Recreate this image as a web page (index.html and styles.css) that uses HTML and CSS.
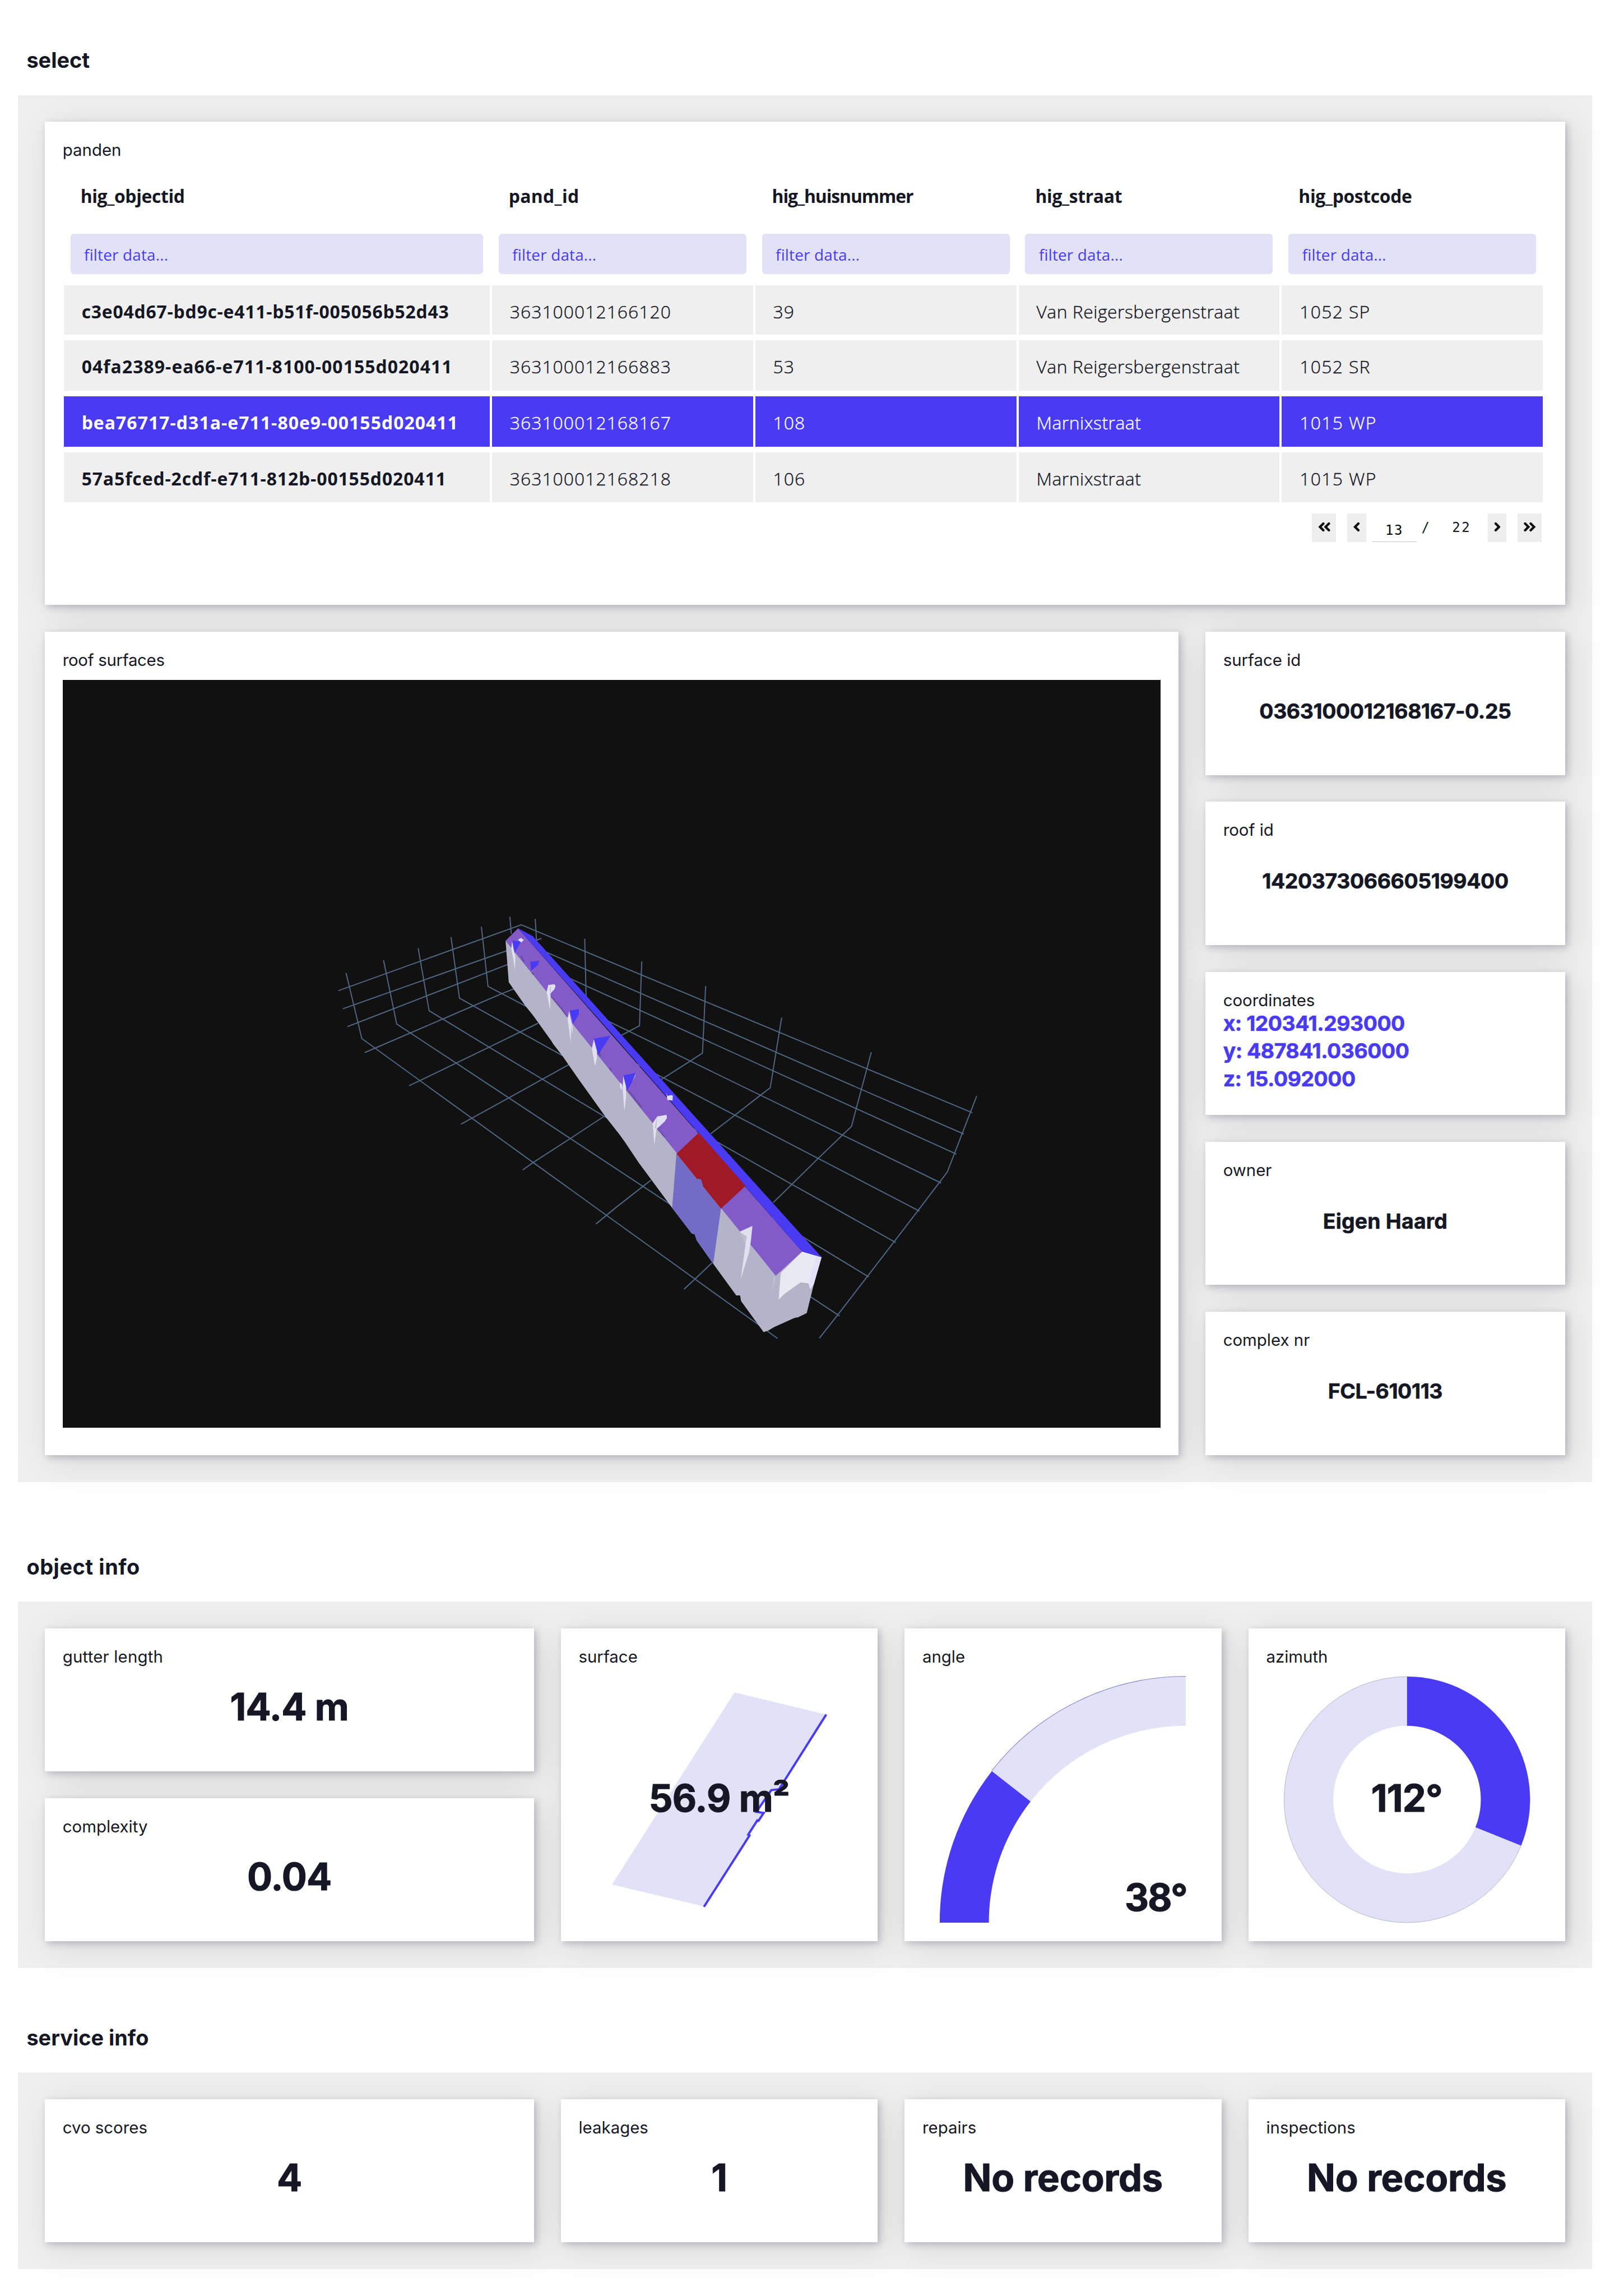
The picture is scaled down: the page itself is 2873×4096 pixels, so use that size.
FILE: index.html
```html
<!DOCTYPE html>
<html lang="nl">
<head>
<meta charset="utf-8">
<title>Roof dashboard</title>
<link rel="stylesheet" href="styles.css">
</head>
<body>
<main class="page">

<section class="section">
  <h2 class="heading heading-first">select</h2>
  <div class="panel panel-select">
    <article class="card card-table">
      <h3 class="label">panden</h3>
      <div class="table">
        <div class="row row-head"><span>hig_objectid</span><span>pand_id</span><span>hig_huisnummer</span><span>hig_straat</span><span>hig_postcode</span></div>
        <div class="row row-filter"><span>filter data...</span><span>filter data...</span><span>filter data...</span><span>filter data...</span><span>filter data...</span></div>
        <div class="row row-data row-top"><span>c3e04d67-bd9c-e411-b51f-005056b52d43</span><span>363100012166120</span><span>39</span><span>Van Reigersbergenstraat</span><span>1052 SP</span></div>
        <div class="row row-data"><span>04fa2389-ea66-e711-8100-00155d020411</span><span>363100012166883</span><span>53</span><span>Van Reigersbergenstraat</span><span>1052 SR</span></div>
        <div class="row row-data row-selected"><span>bea76717-d31a-e711-80e9-00155d020411</span><span>363100012168167</span><span>108</span><span>Marnixstraat</span><span>1015 WP</span></div>
        <div class="row row-data"><span>57a5fced-2cdf-e711-812b-00155d020411</span><span>363100012168218</span><span>106</span><span>Marnixstraat</span><span>1015 WP</span></div>
      </div>
      <nav class="pager">
        <button class="btn btn-wide"><svg width="22" height="18" viewBox="0 0 22 18"><path d="M9.500 3 3.500 9l6 6M19.500 3l-6 6 6 6"/></svg></button>
        <button class="btn btn-prev"><svg width="12" height="18" viewBox="0 0 12 18"><path d="M9 3 3 9l6 6"/></svg></button>
        <span class="page-now">13</span>
        <span class="page-slash">/</span>
        <span class="page-total">22</span>
        <button class="btn btn-next"><svg width="12" height="18" viewBox="0 0 12 18"><path d="M3 3l6 6-6 6"/></svg></button>
        <button class="btn btn-wide"><svg width="22" height="18" viewBox="0 0 22 18"><path d="M2.500 3l6 6-6 6M12.500 3l6 6-6 6"/></svg></button>
      </nav>
    </article>

    <article class="card card-roof">
      <h3 class="label label-roof">roof surfaces</h3>
      <svg class="scene" viewBox="112 1216 1964 1337" preserveAspectRatio="none">
        <g transform="matrix(.408163 0 0 .333333 560 1600)">
          <g class="grid-lines">
            <path d="M110 515 912 162 2889 1170M130 612 1000 235M1000 297 2851 1284M150 708 900 352M1090 430 2819 1392M1290 677 2752 1547"/>
            <path d="M144 420 213 772 964 1437 2035 2381M308 351 366 694 626 903 1290 1440 2307 2260M460 287 508 623 771 818 1290 1200 2435 2051M604 227 641 555 908 738 1090 862 1785 1337 2098 1554 2553 1866M737 172 766 492 930 597 1509 966 1848 1183 2213 1415 2657 1698"/>
            <path d="M226 847 570 666 828 530 880 505M420 1025 468 997 771 818 985 690M648 1231 857 1090 1004 990 1120 912M1350 755 1430 703 1435 525 1440 358M918 1477 964 1437 1127 1308 1274 1190M1525 992 1643 900 1706 850 1720 490"/>
            <path d="M1239 1767 1323 1682 1446 1564 1480 1532M1743 1282 1848 1183 1960 1076 2003 1036 2021 900 2053 660M1625 2117 1674 2061 1748 1975M2016 1652 2098 1554 2213 1415 2320 1289 2359 1243 2434 900 2446 845M2218 2380 2299 2254 2546 1862 2651 1694 2745 1543 2779 1488 2908 1080"/>
            <path d="M862 118 868 210M973 130 979 250M1190 237 1196 545"/>
          </g>
          <path fill="#b4b4c8" d="M843 247 857 470 930 597 965 650 1045 787 1051 800 1095 870 1160 985 1280 1190 1341 1285 1365 1325 1428 1440 1573 1680 1659 1818 1672 1822 1681 1855 1753 1980 1854 2150 1871 2150 1875 2180 1974 2347 1995 2338 2020 2320 2110 2270 2125 2267 2163 2245 2194 2090 2143 1915z"/>
          <path fill="#e9e9f3" d="M2143 1915 2049 2030 2040 2172 2067 2140 2136 2080 2171 2085 2178 2118 2194 2090 2228 1945z"/>
          <path fill="#e1e1f7" d="M2205 1937 2228 1945 2194 2090 2178 2118 2172 2090z"/>
          <path fill="#835bc9" d="M898 180 843 247 2027 2045 2143 1915z"/>
          <path fill="#493bf4" d="M898 180 962 222 1459 900 2228 1945 2143 1915 1302 737z"/>
          <path fill="#a01926" d="M1690 1277 1592 1390 1787 1685 1895 1562z"/>
          <path fill="#716cc6" d="M1592 1390 1573 1680 1659 1818 1672 1822 1681 1855 1753 1980 1787 1685z"/>
          <path fill="#716cc6" d="M1685 1523 1700 1528 1708 1560 1698 1575 1680 1562z"/>
          <g fill="#493bf4">
            <path d="M872 247 912 250 903 270 883 315zM951 360 990 354 986 376 955 408zM1124 622 1164 613 1165 640 1140 692zM1230 773 1303 757 1248 862zM1359 970 1414 957 1400 1000 1376 1052z"/>
          </g>
          <g fill="#e0e0f0">
            <path d="M872 250 868 290 877 345 884 405 886 330 878 290zM897 242 910 232 923 243 912 257zM955 420 974 394 970 400z"/>
            <path d="M1030 485 1057 480 1062 490 1057 508 1040 530 1038 615 1032 580 1023 522zM1122 624 1115 665 1129 795 1130 700 1136 750 1137 710zM1230 776 1221 825 1235 920 1243 880 1244 840zM1359 972 1356 1040 1364 1162 1371 1090 1371 1030zM1345 1008 1354 1018 1352 1048 1345 1035z"/>
            <path d="M1413 960 1398 1005 1412 970zM1548 1063 1553 1080 1568 1075 1576 1078 1575 1104 1552 1101z"/>
            <path d="M1508 1190 1549 1181 1550 1198 1540 1218 1505 1257 1495 1343 1488 1225zM1925 1777 1869 1808 1895 1872 1874 2062 1910 1920 1918 1860z"/>
            <path d="M2022 2048 2023 2060 2008 2135 2019 2070z"/>
          </g>
          <path fill="#bdbdcb" d="M1508 1190 1503 1257 1497 1250zM1042 485 1040 528 1036 510zM1869 1808 1900 1835 1895 1872 1888 1868z"/>
          <path class="speckle" d="M912 330 925 362M958 420 968 428M1045 550 1080 600M1085 605 1112 655M1255 845 1258 870M1382 1052 1440 1142M1510 1258 1540 1300M1300 930 1306 948"/>
        </g>
      </svg>
    </article>

    <div class="side">
      <article class="card"><h3 class="label">surface id</h3><p class="value value-long">0363100012168167-0.25</p></article>
      <article class="card"><h3 class="label">roof id</h3><p class="value value-long">1420373066605199400</p></article>
      <article class="card"><h3 class="label">coordinates</h3><p class="coords">x: 120341.293000<br>y: 487841.036000<br>z: 15.092000</p></article>
      <article class="card"><h3 class="label">owner</h3><p class="value value-name">Eigen Haard</p></article>
      <article class="card"><h3 class="label">complex nr</h3><p class="value value-long">FCL-610113</p></article>
    </div>
  </div>
</section>

<section class="section">
  <h2 class="heading heading-object">object info</h2>
  <div class="panel panel-tiles">
    <article class="card"><h3 class="label label-gutter">gutter length</h3><p class="figure">14.4 m</p></article>
    <article class="card card-tall">
      <h3 class="label">surface</h3>
      <div class="chart">
        <svg viewBox="1003 2980 567 492" width="567" height="492">
          <g transform="matrix(.408163 0 0 .395408 980 2880)">
            <path fill="#e1e1f7" d="M817 370 1219 470 1012 808 978 812 915 910 945 915 922 950 918 950 877 1012 882 1017 683 1338 280 1239z"/>
            <path class="gutter" d="M1219 470 1012 808 978 812 913 910 945 915 922 951 917 949 877 1013 883 1017 683 1340"/>
          </g>
        </svg>
        <p class="figure over over-middle">56.9 m²</p>
      </div>
    </article>
    <article class="card card-tall">
      <h3 class="label">angle</h3>
      <div class="chart">
        <svg viewBox="1618 2980 567 492" width="567" height="492">
          <path fill="none" stroke="#8583cf" stroke-width="2" d="M1774.300 3167.100A440 440 0 0 1 2121 2998"/>
          <path fill="#e1e1f7" d="M1774.300 3167.100A440 440 0 0 1 2121 2998V3086A352 352 0 0 0 1843.600 3221.300z"/>
          <path fill="#493bf4" d="M1681 3438A440 440 0 0 1 1774.300 3167.100L1843.600 3221.300A352 352 0 0 0 1769 3438z"/>
        </svg>
        <p class="figure over over-corner">38°</p>
      </div>
    </article>
    <article class="card card-tall">
      <h3 class="label">azimuth</h3>
      <div class="chart">
        <svg viewBox="2233 2980 567 492" width="567" height="492">
          <circle cx="2516.500" cy="3218" r="176" fill="none" stroke="#e1e1f7" stroke-width="88"/>
          <circle cx="2516.500" cy="3218" r="220" fill="none" stroke="#a9a9c0" stroke-width=".8"/>
          <path fill="#493bf4" d="M2516.500 2998A220 220 0 0 1 2720.500 3300.400L2638.900 3267.400A132 132 0 0 0 2516.500 3086z"/>
        </svg>
        <p class="figure over over-middle">112°</p>
      </div>
    </article>
    <article class="card"><h3 class="label">complexity</h3><p class="figure">0.04</p></article>
  </div>
</section>

<section class="section">
  <h2 class="heading heading-service">service info</h2>
  <div class="panel panel-tiles">
    <article class="card"><h3 class="label">cvo scores</h3><p class="figure">4</p></article>
    <article class="card"><h3 class="label">leakages</h3><p class="figure">1</p></article>
    <article class="card"><h3 class="label">repairs</h3><p class="figure figure-text">No records</p></article>
    <article class="card"><h3 class="label">inspections</h3><p class="figure figure-text">No records</p></article>
  </div>
</section>

</main>
</body>
</html>
```
FILE: styles.css
```css
:root {
  --ink: #151725;
  --accent: #493bf4;
  --tint: #e1e1f7;
  --grey: #efefef;
}
* { box-sizing: border-box; margin: 0; padding: 0; }
html { background: #fefefe; overflow: hidden; }
body { background: #fefefe; color: var(--ink); font-family: Inter, "Liberation Sans", sans-serif; }
.page { zoom: 0.99757; width: 2880px; height: 4106px; }

/* section titles */
.heading {
  display: flex;
  align-items: flex-end;
  padding: 0 0 37.6px 47.5px;
  font-size: 38px;
  line-height: 48px;
  font-weight: 700;
}
.heading-first { height: 170px; }
.heading-object { height: 214px; letter-spacing: .55px; }
.heading-service { height: 186px; }

.panel {
  display: grid;
  gap: 48px;
  margin: 0 32px;
  padding: 48px;
  background: var(--grey);
}
.panel-select { grid-template-columns: 2028px 644px; grid-template-rows: 864px 1472px; }
.panel-tiles { grid-template-columns: 875px repeat(3, 567px); grid-auto-rows: 256px; }

.card {
  background: #fff;
  padding: 32px;
  box-shadow: 4px 4px 12px rgba(20, 24, 50, .22), 10px 10px 56px rgba(0, 0, 0, .1);
}
.card-table { grid-column: 1 / -1; }
.card-tall { grid-row: span 2; }
.side { display: grid; grid-auto-rows: 256px; gap: 48px; }

.label { font-size: 29.5px; line-height: 36.6px; font-weight: 400; }
.label-roof { letter-spacing: -.3px; }
.label-gutter { letter-spacing: .2px; }

/* values */
.value {
  margin-top: 48.6px;
  font-size: 37.5px;
  line-height: 50px;
  font-weight: 700;
  -webkit-text-stroke: .6px currentColor;
  text-align: center;
  white-space: nowrap;
}
.value-long { letter-spacing: -.4px; }
.value-name { letter-spacing: .2px; }
.coords {
  margin-top: -1.6px;
  font-size: 37.5px;
  line-height: 50px;
  font-weight: 700;
  -webkit-text-stroke: .6px currentColor;
  letter-spacing: -.5px;
  color: var(--accent);
}
.figure {
  margin-top: 31.6px;
  font-size: 67px;
  line-height: 80px;
  font-weight: 700;
  -webkit-text-stroke: 1px currentColor;
  letter-spacing: -.8px;
  text-align: center;
  white-space: nowrap;
}
.figure-text { letter-spacing: -.2px; }

/* table */
.table { font-family: "Open Sans", "Liberation Sans", sans-serif; font-size: 32px; }
.row { display: grid; grid-template-columns: 766px repeat(4, 471px); }
.row-head { height: 126px; padding-top: 1px; align-items: center; font-weight: 700; letter-spacing: -.38px; }
.row-head span { padding-left: 32px; }
.row-head span:nth-child(2) { letter-spacing: .3px; }
.row-head span:nth-child(3) { letter-spacing: -1.12px; }
.row-filter { height: 98px; padding-top: 5.4px; font-size: 28px; letter-spacing: .16px; color: var(--accent); }
.row-filter span {
  height: 72px;
  margin: 0 14px;
  padding: 3px 0 0 24.5px;
  line-height: 70px;
  border-radius: 6px;
  background: var(--tint);
}
.row-data { height: 90px; margin-bottom: 10px; font-weight: 300; }
.row-top { height: 88px; }
.row-data:last-child { margin-bottom: 0; }
.row-data span { display: flex; align-items: center; margin: 0 2px; padding: 4px 0 0 32px; background: var(--grey); -webkit-text-stroke: .4px currentColor; }
.row-data span:nth-child(1) { font-weight: 700; letter-spacing: 1.05px; -webkit-text-stroke: 0; }
.row-data:last-child span:nth-child(1) { letter-spacing: .88px; }
.row-top span:nth-child(1) { letter-spacing: .77px; }
.row-data span:nth-child(2) { letter-spacing: 1px; }
.row-data span:nth-child(3) { letter-spacing: 1px; }
.row-data span:nth-child(4) { letter-spacing: .48px; }
.row-data span:nth-child(5) { letter-spacing: 1.3px; }
.row-selected { color: #fff; }
.row.row-selected span { background: var(--accent); }
.row-selected span:nth-child(1) { color: #fff; }

/* pager */
.pager {
  display: flex;
  justify-content: flex-end;
  height: 51px;
  margin-top: 20px;
  padding-right: 10px;
  font: 24px/51px "DejaVu Sans Mono", monospace;
  letter-spacing: 2.4px;
  text-align: center;
}
.btn { display: flex; align-items: center; justify-content: center; width: 34px; height: 51px; padding-bottom: 3px; border: 0; background: #eee; }
.btn path { fill: none; stroke: #111; stroke-width: 4.3; stroke-linecap: round; stroke-linejoin: miter; }
.btn-wide { width: 43px; }
.btn-prev { margin: 0 10px 0 20px; }
.btn-next { margin-right: 20px; }
.page-now { width: 80px; padding-top: 7px; line-height: 47px; border-bottom: 2px solid #c8c8cc; letter-spacing: 1.5px; color: #000; }
.page-slash { width: 34px; }
.page-total { width: 93px; }

/* drawings */
.scene { display: block; width: 1964px; height: 1337px; margin-top: 17.4px; background: #111; }
.grid-lines path { fill: none; stroke: #506784; stroke-width: 2px; vector-effect: non-scaling-stroke; }
.speckle { fill: none; stroke: #3c2f55; stroke-width: 2.5px; stroke-dasharray: 1 2; vector-effect: non-scaling-stroke; }
.chart { position: relative; margin: -.6px -32px 0; height: 492px; }
.chart svg { display: block; }
.gutter { fill: none; stroke: var(--accent); stroke-width: 4px; vector-effect: non-scaling-stroke; }
.over { position: absolute; margin: 0; }
.over-middle { left: 0; right: 0; top: 196px; }
.over-corner { right: 62px; top: 373px; letter-spacing: -2px; }
```
